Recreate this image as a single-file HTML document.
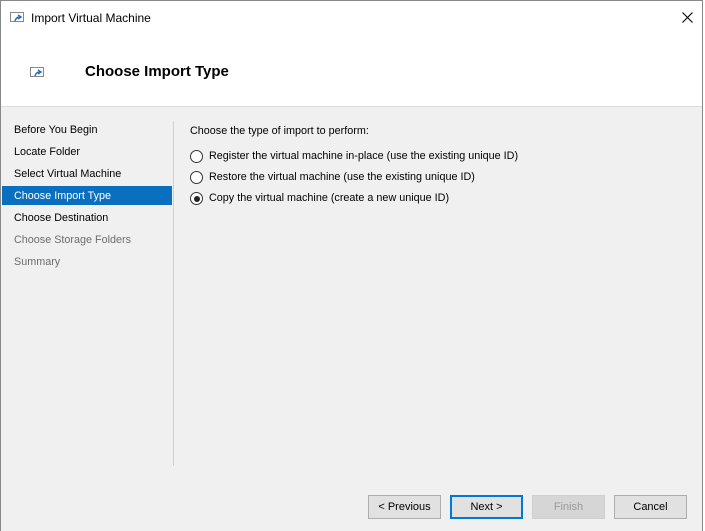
<!DOCTYPE html>
<html><head><meta charset="utf-8"><style>
*{margin:0;padding:0;box-sizing:border-box}
body{width:705px;height:531px;background:#fff;font-family:"Liberation Sans",sans-serif;font-size:10.8px;color:#000;position:relative;overflow:hidden}
.win{position:absolute;left:0;top:0;width:703px;height:531px;border-left:1px solid #888;border-right:1px solid #888;border-top:1px solid #888;background:#f0f0f0}
.title{position:absolute;left:0;top:0;width:701px;height:106px;background:#fff;border-bottom:1px solid #dcdcdc}
.t{position:absolute;white-space:nowrap}
.ico{position:absolute;width:14px;height:10px;border:1px solid #888;background:#fff}
.ico svg{position:absolute;left:2px;top:1px}
.nav{position:absolute;left:13px;white-space:nowrap}
.sel{position:absolute;left:1px;top:185px;width:170px;height:19px;background:#0b6fc0}
.radio{position:absolute;left:189px;width:13px;height:13px;border:1px solid #333;border-radius:50%;background:#fff}
.radio.on::after{content:"";position:absolute;left:2.5px;top:2.5px;width:6px;height:6px;border-radius:50%;background:#222}
.btn{position:absolute;top:494px;height:24px;border:1px solid #adadad;background:#e1e1e1;text-align:center;line-height:22px;font-size:11px}
</style></head><body>
<div class="win">
 <div class="title">
  <div class="ico" style="left:9px;top:11px"><svg width="10" height="8"><path d="M2 7 Q3 3 7 3 M5 1 L8 3 L5 5" stroke="#2a6fc0" stroke-width="1.5" fill="none"/></svg></div>
  <div class="t" style="left:30px;top:10px;font-size:12px">Import Virtual Machine</div>
  <svg style="position:absolute;left:681px;top:11px" width="11" height="11"><path d="M0.5 0.5 L10.5 10.5 M10.5 0.5 L0.5 10.5" stroke="#000" stroke-width="1.1"/></svg>
  <div class="ico" style="left:29px;top:66px"><svg width="10" height="8"><path d="M2 7 Q3 3 7 3 M5 1 L8 3 L5 5" stroke="#2a6fc0" stroke-width="1.5" fill="none"/></svg></div>
  <div class="t" style="left:84px;top:62px;font-size:15px;font-weight:bold">Choose Import Type</div>
 </div>
 <div class="sel"></div>
 <div class="nav" style="top:123px">Before You Begin</div>
 <div class="nav" style="top:145px">Locate Folder</div>
 <div class="nav" style="top:167px">Select Virtual Machine</div>
 <div class="nav" style="top:189px;color:#fff">Choose Import Type</div>
 <div class="nav" style="top:211px">Choose Destination</div>
 <div class="nav" style="top:233px;color:#6d6d6d">Choose Storage Folders</div>
 <div class="nav" style="top:255px;color:#6d6d6d">Summary</div>
 <div style="position:absolute;left:172px;top:120px;width:1px;height:345px;background:#d0d0d0"></div>
 <div class="t" style="left:189px;top:124px">Choose the type of import to perform:</div>
 <div class="radio" style="top:149px"></div>
 <div class="t" style="left:208px;top:149px">Register the virtual machine in-place (use the existing unique ID)</div>
 <div class="radio" style="top:170px"></div>
 <div class="t" style="left:208px;top:170px">Restore the virtual machine (use the existing unique ID)</div>
 <div class="radio on" style="top:191px"></div>
 <div class="t" style="left:208px;top:191px">Copy the virtual machine (create a new unique ID)</div>
 <div class="btn" style="left:367px;width:73px">&lt; Previous</div>
 <div class="btn" style="left:449px;width:73px;border:2px solid #0078d7;line-height:20px">Next &gt;</div>
 <div class="btn" style="left:531px;width:73px;color:#9a9a9a;border-color:#cfcfcf;background:#d6d6d6">Finish</div>
 <div class="btn" style="left:613px;width:73px">Cancel</div>
</div>
</body></html>
